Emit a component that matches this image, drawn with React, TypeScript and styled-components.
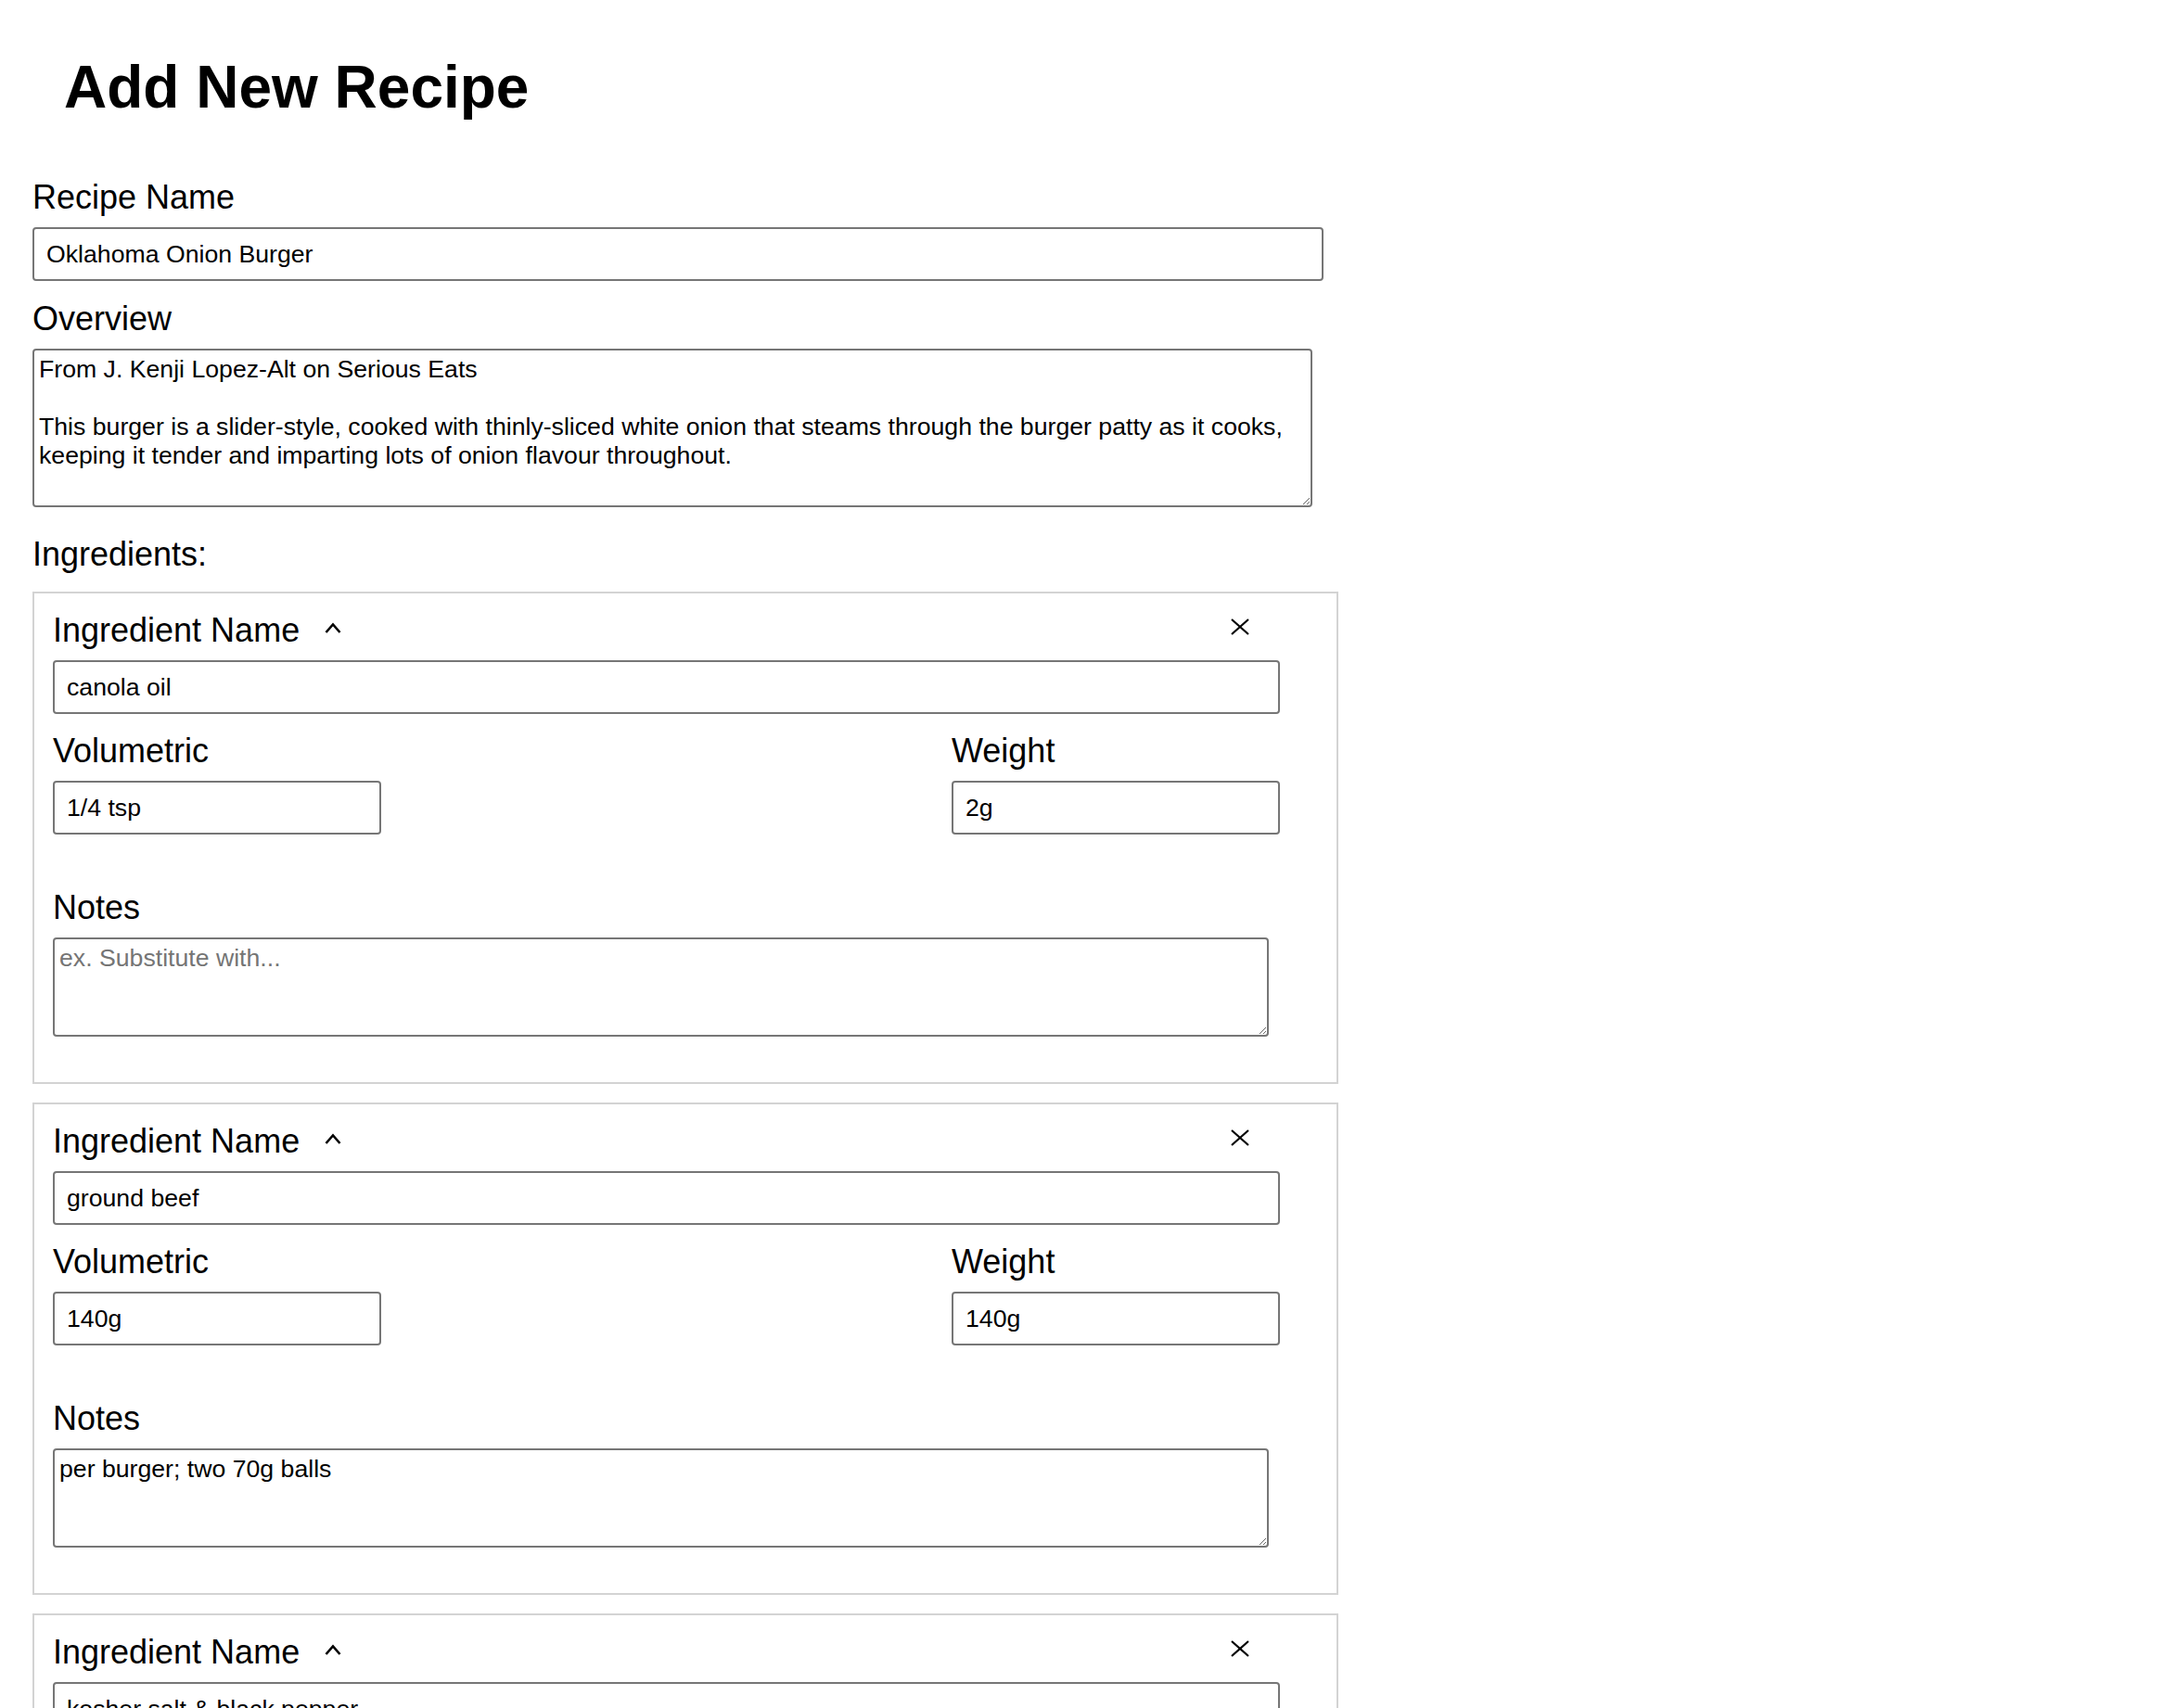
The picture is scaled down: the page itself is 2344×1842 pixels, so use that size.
import React from "react";
import styled, { createGlobalStyle } from "styled-components";

const GlobalStyle = createGlobalStyle`
  body {
    margin: 0;
    background: #fff;
    color: #000;
    font-family: "Liberation Sans", Arial, sans-serif;
  }
`;

type Ingredient = {
  name: string;
  volumetric: string;
  weight: string;
  notes: string;
};

const ingredients: Ingredient[] = [
  { name: "canola oil", volumetric: "1/4 tsp", weight: "2g", notes: "" },
  {
    name: "ground beef",
    volumetric: "140g",
    weight: "140g",
    notes: "per burger; two 70g balls",
  },
  { name: "kosher salt & black pepper", volumetric: "", weight: "", notes: "" },
];

const overview = `From J. Kenji Lopez-Alt on Serious Eats

This burger is a slider-style, cooked with thinly-sliced white onion that steams through the burger patty as it cooks, keeping it tender and imparting lots of onion flavour throughout.`;

const CloseIcon = () => (
  <svg width="20" height="18" viewBox="0 0 20 18">
    <path d="M1 1 L19 17 M19 1 L1 17" stroke="#000" strokeWidth="2.2" fill="none" />
  </svg>
);

const CaretIcon = () => (
  <svg width="18" height="12" viewBox="0 0 18 12">
    <polyline points="1.5,11 9,2.5 16.5,11" stroke="#000" strokeWidth="2.6" fill="none" />
  </svg>
);

const IngredientCard = ({ item }: { item: Ingredient }) => (
  <Card>
    <CardHeader>
      <Label as="span" $flush>Ingredient Name</Label>
      <CaretButton aria-label="collapse">
        <CaretIcon />
      </CaretButton>
      <RemoveButton aria-label="remove">
        <CloseIcon />
      </RemoveButton>
    </CardHeader>
    <TextInput $width="1323px" defaultValue={item.name} />
    <MeasureRow>
      <MeasureCol>
        <Label>Volumetric</Label>
        <TextInput $width="354px" defaultValue={item.volumetric} />
      </MeasureCol>
      <MeasureCol>
        <Label>Weight</Label>
        <TextInput $width="354px" defaultValue={item.weight} />
      </MeasureCol>
    </MeasureRow>
    <NotesBlock>
      <Label>Notes</Label>
      <TextArea
        $width="1311px"
        $height="107px"
        placeholder="ex. Substitute with..."
        defaultValue={item.notes}
      />
    </NotesBlock>
  </Card>
);

const App = () => {
  return (
    <>
      <GlobalStyle />
      <Page>
        <Title>Add New Recipe</Title>
        <Form>
          <Field>
            <Label>Recipe Name</Label>
            <TextInput $width="1392px" defaultValue="Oklahoma Onion Burger" />
          </Field>
          <Field>
            <Label>Overview</Label>
            <TextArea $width="1380px" $height="171px" defaultValue={overview} />
          </Field>
          <SectionLabel>Ingredients:</SectionLabel>
          <CardList>
            {ingredients.map((item, i) => (
              <IngredientCard key={i} item={item} />
            ))}
          </CardList>
        </Form>
      </Page>
    </>
  );
};

export default App;

const Page = styled.main`
  padding: 57px 0 40px 35px;
`;

const Title = styled.h1`
  margin: 0;
  padding-left: 34px;
  font-size: 64px;
  line-height: 74px;
  font-weight: 700;
`;

const Form = styled.form`
  display: flex;
  flex-direction: column;
  margin-top: 61px;
`;

const Field = styled.div`
  display: flex;
  flex-direction: column;
  align-items: flex-start;
  margin-bottom: 20px;
`;

const Label = styled.label<{ $flush?: boolean }>`
  display: block;
  font-size: 36px;
  line-height: 41px;
  margin-bottom: ${(p) => (p.$flush ? "0" : "12px")};
`;

const SectionLabel = styled.div`
  font-size: 36px;
  line-height: 41px;
  margin-top: 10px;
  margin-bottom: 20px;
`;

const TextInput = styled.input<{ $width: string }>`
  box-sizing: border-box;
  width: ${(p) => p.$width};
  height: 58px;
  padding: 0 13px;
  border: 2px solid #767676;
  border-radius: 4px;
  font-family: "Liberation Sans", Arial, sans-serif;
  font-size: 26.67px;
  color: #000;
  background: #fff;
  outline: none;
`;

const TextArea = styled.textarea<{ $width: string; $height: string }>`
  box-sizing: border-box;
  display: block;
  width: ${(p) => p.$width};
  height: ${(p) => p.$height};
  padding: 5px;
  border: 2px solid #767676;
  border-radius: 4px;
  font-family: "Liberation Sans", Arial, sans-serif;
  font-size: 26.67px;
  line-height: normal;
  color: #000;
  background: #fff;
  outline: none;
  overflow: hidden;

  &::placeholder {
    color: #757575;
  }
`;

const CardList = styled.div`
  display: flex;
  flex-direction: column;
  gap: 20px;
`;

const Card = styled.section`
  box-sizing: border-box;
  width: 1408px;
  border: 2px solid #d3d3d3;
  padding: 19px 61px 49px 20px;
`;

const CardHeader = styled.div`
  display: flex;
  align-items: flex-start;
  width: 1323px;
  height: 41px;
  margin-bottom: 12px;
`;

const IconButton = styled.button`
  display: flex;
  padding: 0;
  border: none;
  background: none;
  cursor: pointer;
`;

const CaretButton = styled(IconButton)`
  margin: 12px 0 0 27px;
`;

const RemoveButton = styled(IconButton)`
  margin: 8px 33px 0 auto;
`;

const MeasureRow = styled.div`
  display: flex;
  justify-content: space-between;
  width: 1323px;
  margin-top: 19px;
`;

const MeasureCol = styled.div`
  display: flex;
  flex-direction: column;
`;

const NotesBlock = styled.div`
  margin-top: 58px;
`;
